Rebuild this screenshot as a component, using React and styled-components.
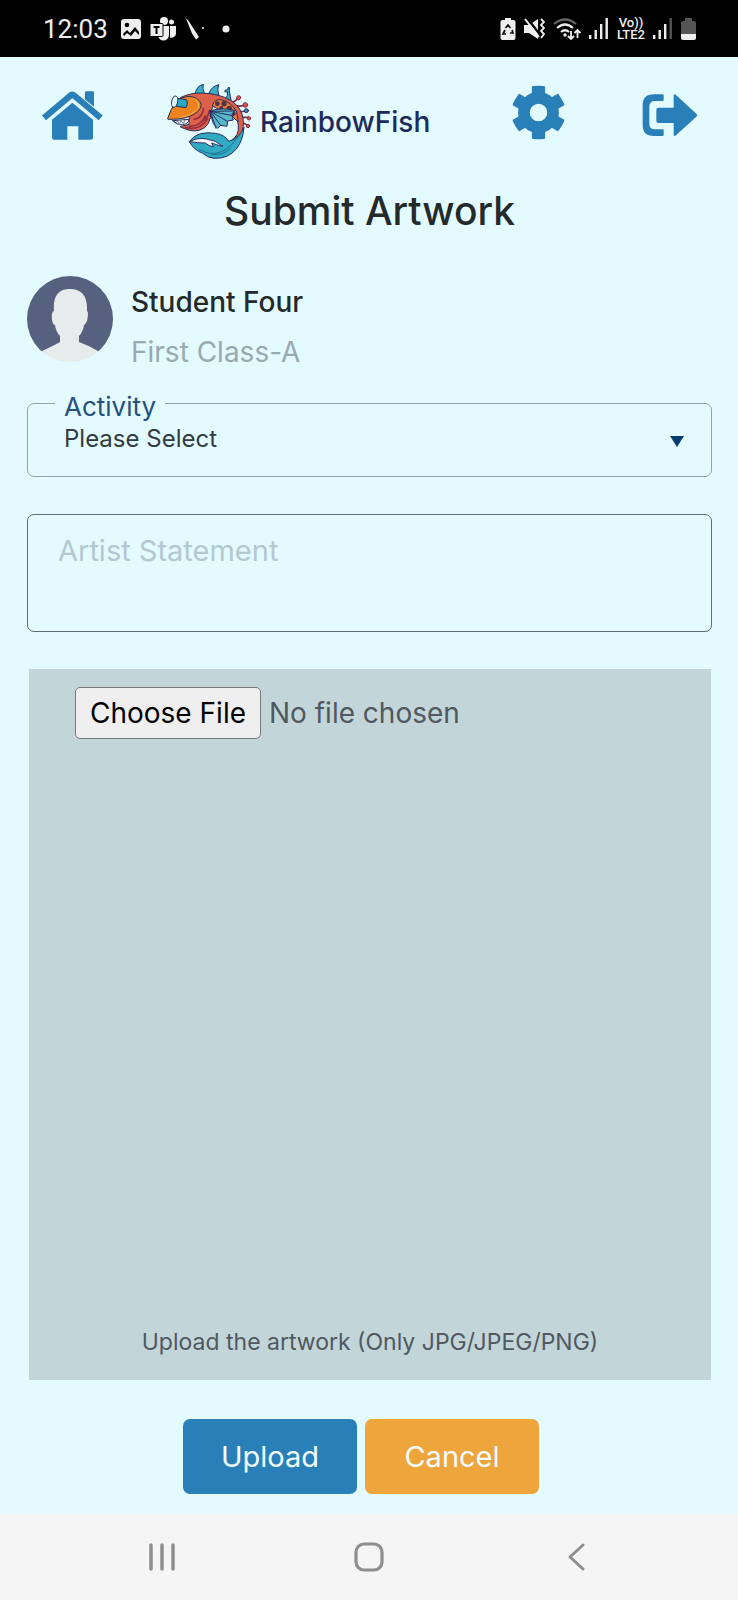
import React from "react";
import styled, { createGlobalStyle } from "styled-components";

const GlobalStyle = createGlobalStyle`
  *, *::before, *::after { box-sizing: border-box; }
  body { margin: 0; background: #e3fafe; }
  button, input, select, textarea { font: inherit; color: inherit; }
`;

const Page = styled.div`
  min-height: 100vh;
  display: flex;
  flex-direction: column;
  background: #e3fafe;
  color: #24292c;
  font-family: Inter, "Open Sans", sans-serif;
  font-size: 28px;
`;

const StatusBar = styled.div`
  display: flex;
  justify-content: space-between;
  align-items: center;
  height: 57px;
  padding: 0 42px 0 43px;
  background: #000;
  color: #eee;
  font-family: Roboto, sans-serif;
  svg { display: block; }
`;

const StatusGroup = styled.div`
  display: flex;
  align-items: center;
  gap: ${(p) => p.$gap}px;
`;

const Clock = styled.time`
  margin-right: 4px;
  font-size: 26px;
  line-height: 32px;
`;

const Network = styled.span`
  display: flex;
  flex-direction: column;
  align-items: center;
  font-size: 13px;
  font-weight: 500;
  line-height: 12px;
`;

const Header = styled.header`
  display: flex;
  align-items: flex-start;
  padding: 26px 40px 0 41px;
  svg { display: block; }
`;

const IconButton = styled.button`
  padding: ${(p) => p.$drop}px 0 0;
  border: 0;
  background: none;
  color: #2980b9;
  cursor: pointer;
`;

const Logo = styled.a`
  display: flex;
  align-items: center;
  gap: 8px;
  margin-left: 62px;
  color: #1d2a5b;
  font-size: 28px;
  font-weight: 500;
  line-height: 36px;
  text-decoration: none;
`;

const HeaderActions = styled.nav`
  display: flex;
  align-items: flex-start;
  gap: 77px;
  margin-left: auto;
`;

const Main = styled.main`
  flex: 1;
  display: flex;
  flex-direction: column;
  padding: 0 26px 20px 27px;
`;

const Title = styled.h1`
  margin: 26px 0 41px;
  font-size: 39px;
  font-weight: 500;
  line-height: 48px;
  text-align: center;
`;

const Student = styled.section`
  display: flex;
  align-items: flex-start;
  gap: 18px;
  margin-bottom: 17px;
  svg { display: block; }
`;

const StudentText = styled.div`
  padding-top: 8px;
`;

const StudentName = styled.h2`
  margin: 0 0 14px;
  font-size: 28px;
  font-weight: 500;
  line-height: 36px;
`;

const StudentClass = styled.p`
  margin: 0;
  color: #98a9b2;
  line-height: 36px;
`;

const Field = styled.fieldset`
  min-width: 0;
  height: 90px;
  margin: 0 0 37px;
  padding: 0 26px 0 27px;
  border: 1px solid #8fa3aa;
  border-radius: 7px;
`;

const Legend = styled.legend`
  padding: 8px 9px 0;
  color: #27507e;
  font-size: 26px;
  line-height: 24px;
`;

const SelectWrap = styled.div`
  position: relative;
  svg { position: absolute; right: 1px; top: 17px; pointer-events: none; }
`;

const Select = styled.select`
  display: block;
  width: 100%;
  height: 44px;
  padding: 0 30px 4px 9px;
  border: 0;
  background: transparent;
  color: #323c42;
  font-size: 24px;
  line-height: 32px;
  appearance: none;
`;

const Statement = styled.textarea`
  display: block;
  width: 100%;
  height: 118px;
  margin-bottom: 37px;
  padding: 18px 30px;
  border: 1px solid #5f6d77;
  border-radius: 7px;
  background: transparent;
  font-size: 29px;
  line-height: 36px;
  resize: none;
  &::placeholder { color: #b3c8d1; opacity: 1; }
`;

const DropArea = styled.section`
  flex: 1;
  display: flex;
  flex-direction: column;
  justify-content: space-between;
  min-height: 300px;
  margin: 0 1px 39px 2px;
  padding: 18px 46px 22px;
  background: #c2d6da;
  color: #505860;
`;

const FileInput = styled.input`
  width: 100%;
  line-height: 36px;
  &::file-selector-button {
    height: 52px;
    margin: 0 8px 0 0;
    padding: 0 14px;
    border: 1px solid #777;
    border-radius: 5px;
    background: #efefef;
    color: #000;
    font: inherit;
  }
`;

const Hint = styled.label`
  font-size: 23px;
  line-height: 32px;
  text-align: center;
`;

const Actions = styled.div`
  display: flex;
  justify-content: center;
  gap: 8px;
  padding-right: 17px;
`;

const ActionButton = styled.button`
  width: 174px;
  height: 75px;
  border: 0;
  border-radius: 7px;
  background: ${(p) => (p.$primary ? "#2980b9" : "#eea63c")};
  color: #f2fcff;
  font-size: 29px;
  cursor: pointer;
`;

const SystemNav = styled.nav`
  display: grid;
  grid-template-columns: 1fr 1fr 1fr;
  justify-items: center;
  align-items: center;
  height: 86px;
  padding: 0 58px;
  background: #f5f5f5;
  svg { display: block; }
`;

const SystemButton = styled.button`
  padding: 8px;
  border: 0;
  background: none;
  color: #8e8e8e;
`;

const PhotoIcon = () => (
  <svg width="20" height="20" viewBox="0 0 20 20">
    <rect width="20" height="20" rx="3" fill="#eee" />
    <circle cx="6" cy="6" r="2.3" fill="#000" />
    <path d="M2 15l4-4 3 3 5-6 4 5v3l-4-4-4 5-4-3-3 3z" fill="#000" />
  </svg>
);

const TeamsIcon = () => (
  <svg width="26" height="24" viewBox="0 0 26 24" fill="#eee">
    <circle cx="14" cy="4" r="4" />
    <circle cx="21.500" cy="5" r="2.500" />
    <path d="M8 9h11v9a5.500 5.500 0 0 1-11 0z" />
    <path d="M20 9h6v7a4.500 4.500 0 0 1-6 4.500z" />
    <rect y="6.500" width="13" height="13" rx="1" stroke="#000" />
    <path d="M3.500 10h6M6.500 10v7" stroke="#000" strokeWidth="2" />
  </svg>
);

const PenIcon = () => (
  <svg width="20" height="24" viewBox="0 0 20 24" fill="#eee">
    <path d="M1 1.500L3 3l11 17-3 2.500-4-6z" />
    <circle cx="18" cy="11" r="1" />
  </svg>
);

const BatterySaverIcon = () => (
  <svg width="16" height="22" viewBox="0 0 16 22">
    <path d="M5 0h6v2h2.500a2 2 0 0 1 2 2v16a2 2 0 0 1-2 2h-11a2 2 0 0 1-2-2V4a2 2 0 0 1 2-2H5z" fill="#eee" />
    <path d="M5.500 10L8 7l2.500 3M12 12l1 3h-3M6 16H3l2-4" fill="none" stroke="#111" strokeWidth="1.700" />
  </svg>
);

const MuteIcon = () => (
  <svg width="21" height="22" viewBox="0 0 21 22">
    <path d="M0 7h5l9-6v20l-9-6H0z" fill="#eee" />
    <path d="M3 0l14 18" stroke="#000" strokeWidth="2.500" />
    <path d="M1 1l14 18" stroke="#eee" strokeWidth="2" />
    <path d="M17 1l3 3-3 3 3 3-3 3 3 3-3 4" fill="none" stroke="#eee" strokeWidth="1.800" />
  </svg>
);

const WifiIcon = () => (
  <svg width="28" height="22" viewBox="0 0 28 22" fill="none" strokeWidth="2.200">
    <path d="M1 6q11-9 22 0" stroke="#666" />
    <path d="M4 10q8-7 16 0M8 14q4-3.500 8 0" stroke="#eee" />
    <circle cx="12" cy="17" r="1.700" fill="#eee" />
    <path d="M18 13v7m-3-2l3 3 3-3M24.500 20v-7m-3 2l3-3 3 3" stroke="#eee" strokeWidth="1.800" />
  </svg>
);

const SignalIcon = ({ last = "#eee" }) => (
  <svg width="20" height="21" viewBox="0 0 20 21" fill="#eee">
    <rect y="17" width="2.400" height="4" />
    <rect x="5.500" y="12" width="2.400" height="9" />
    <rect x="11" y="6" width="2.400" height="15" />
    <rect x="16.500" width="2.400" height="21" fill={last} />
  </svg>
);

const BatteryIcon = () => (
  <svg width="15" height="22" viewBox="0 0 15 22">
    <path d="M4 0h7v3h2a2 2 0 0 1 2 2v12H0V5a2 2 0 0 1 2-2h2z" fill="#555" />
    <path d="M0 16h15v4a2 2 0 0 1-2 2H2a2 2 0 0 1-2-2z" fill="#eee" />
  </svg>
);

const HomeIcon = () => (
  <svg width="63" height="51" viewBox="63 60 189 152" fill="currentColor">
    <path d="M198 63h21q3 0 3 3v44l-27-22V66q0-3 3-3z" />
    <path d="M72 143l81-68q4-3 8 0l81 68" fill="none" stroke="currentColor" strokeWidth="19" strokeLinejoin="round" />
    <path d="M157 98l62 51v54q0 6-6 6h-38v-41h-33v41h-40q-6 0-6-6v-54z" />
  </svg>
);

const GearIcon = () => (
  <svg width="53" height="55" viewBox="67 43 158 166" fill="currentColor">
    <circle cx="146" cy="126" r="44" fill="none" stroke="currentColor" strokeWidth="35" />
    {[0, 60, 120, 180, 240, 300].map((angle) => (
      <path key={angle} d="M126 74V49q0-3 4-3 16-2 32 0 4 0 4 3v25l12 8h-64z" transform={`rotate(${angle} 146 126)`} />
    ))}
  </svg>
);

const ExitIcon = () => (
  <svg width="56" height="44" viewBox="457 70 168 130" fill="currentColor">
    <path d="M519 73h-27q-33 0-33 33v59q0 33 33 33h27q3 0 3-3v-14q0-3-3-3h-23q-17 0-17-17v-51q0-17 17-17h23q3 0 3-3V76q0-3-3-3z" />
    <path d="M506 113h46V78q0-8 7-3l61 56q5 4 0 9l-61 56q-7 5-7-3v-34h-46q-6 0-6-6v-34q0-6 6-6z" />
  </svg>
);

const FishIcon = () => (
  <svg width="86" height="78" viewBox="48 36 258 234" stroke="#26305f" strokeWidth="3" strokeLinejoin="round" strokeLinecap="round" aria-hidden="true">
    <path d="M135 69q5-25 25-29-4 12 3 27zM177 66q8-20 29-25-5 13 0 32z" fill="#39adc9" />
    <path d="M228 82q8-10 4-20l-7 1v-5l8-2 1-6h5l-1 9q3 18 6 33z" fill="#39adc9" />
    <g fill="none" stroke="#7e3044" strokeWidth="5">
      <path d="M245 94q13-3 18-12M255 103q15 5 26 0M265 121q12 3 20-2M272 139h23M275 153l17 10" />
    </g>
    <g fill="#d8564c" stroke="#7e3044">
      <circle cx="266" cy="80" r="6" /><circle cx="286" cy="102" r="7" />
      <circle cx="297" cy="142" r="5" /><circle cx="294" cy="165" r="5" />
    </g>
    <circle cx="289" cy="119" r="6" fill="#398db0" />
    <path d="M80 87q29-21 72-21 54 1 90 22 35 22 38 61 2 35-20 63-13-8-17-2 25-16 22-47-4-46-39-61-34-10-42 15-1 51-36 61-26 6-58-11l27-7q9-38-37-73z" fill="#df6048" />
    <path d="M187 104q6-23 30-17 28 7 43 36l5 30-22-20-27-14z" fill="#ed7b36" />
    <g fill="#51324a" stroke="none"><circle cx="202" cy="98" r="7" /><circle cx="222" cy="98" r="8" /><circle cx="238" cy="112" r="8" /><circle cx="250" cy="128" r="7" /><circle cx="214" cy="111" r="6" /></g>
    <g fill="none" stroke="#912f43" strokeWidth="5"><path d="M118 166q34 1 48-31M106 169q43 12 67-26M133 145q24-4 28-32M158 149q17-10 20-29" /></g>
    <path d="M53 142q7-28 30-54 32-21 58-5 24 18 2 39-28 25-88 23z" fill="#ed831f" />
    <path d="M136 83q21 21 0 38-19 15-47 19" fill="none" stroke="#f5b13f" />
    <path d="M68 149l49-4q0 13-20 16-17 2-29-12z" fill="#f6faf5" />
    <path d="M72 151l6 4 4-5 6 7 5-7 7 7 5-9" fill="none" strokeWidth="2" />
    <path d="M82 82l27 4q6 8-1 24l-28-4z" fill="#29a9c4" />
    <ellipse cx="74" cy="92" rx="9" ry="17" fill="#dcf4f8" transform="rotate(12 74 92)" />
    <path d="M179 119q40-10 75-1l-9 14 5 15-17 3-2 16-19-3-9 9-12-13z" fill="#57b8cc" />
    <path d="M181 121l70-1M181 121l63 12M181 121l51 30M181 121l32 43M181 121l17 51" fill="none" />
    <path d="M282 170q-16 33-46 41-12-20-40-24-22-4-45 1-22 7-33 24 14 25 40 35 14 13 34 15 42 2 67-28 20-25 23-64z" fill="#31aac3" />
    <path d="M119 212q24-14 50-8 28 3 50 22-22-5-34-10l5 12q-14-3-24-12-22 0-47-4z" fill="#f6fbfd" />
    <path d="M148 235q33 22 69 6 26-11 51-49M185 251q35 3 56-18" fill="none" stroke="#1f7392" />
  </svg>
);

const Avatar = () => (
  <svg width="86" height="86" viewBox="0 0 86 86" role="img" aria-label="Student">
    <defs><clipPath id="avatar-circle"><circle cx="43" cy="43" r="43" /></clipPath></defs>
    <g clipPath="url(#avatar-circle)">
      <path d="M0 0h86v76H0z" fill="#56607f" />
      <path d="M27 35q-2-22 16-22t17 22q2 1 0 10-2 4-3 4-1 7-5 11v6q11 4 19 9l18 11H-3l18-11q11-5 18-9v-6q-4-4-5-11-2 0-3-5-1-8 2-9z" fill="#e6ebec" />
    </g>
  </svg>
);

export default function App() {
  return (
    <Page>
      <GlobalStyle />
      <StatusBar>
        <StatusGroup $gap={9}>
          <Clock>12:03</Clock>
          <PhotoIcon />
          <TeamsIcon />
          <PenIcon />
          <svg width="20" height="8" viewBox="0 0 20 8"><circle cx="12" cy="4" r="3.500" fill="#eee" /></svg>
        </StatusGroup>
        <StatusGroup $gap={8}>
          <BatterySaverIcon />
          <MuteIcon />
          <WifiIcon />
          <SignalIcon />
          <Network><span>Vo))</span><span>LTE2</span></Network>
          <SignalIcon last="#555" />
          <BatteryIcon />
        </StatusGroup>
      </StatusBar>

      <Header>
        <IconButton $drop={7} aria-label="Home"><HomeIcon /></IconButton>
        <Logo href="#"><FishIcon />RainbowFish</Logo>
        <HeaderActions>
          <IconButton $drop={2} aria-label="Settings"><GearIcon /></IconButton>
          <IconButton $drop={10} aria-label="Log out"><ExitIcon /></IconButton>
        </HeaderActions>
      </Header>

      <Main>
        <Title>Submit Artwork</Title>
        <Student>
          <Avatar />
          <StudentText>
            <StudentName>Student Four</StudentName>
            <StudentClass>First Class-A</StudentClass>
          </StudentText>
        </Student>

        <Field>
          <Legend><label htmlFor="activity">Activity</label></Legend>
          <SelectWrap>
            <Select id="activity" defaultValue="">
              <option value="">Please Select</option>
            </Select>
            <svg width="14" height="11" viewBox="0 0 14 11"><path d="M0 0h14L7 11z" fill="#043b70" /></svg>
          </SelectWrap>
        </Field>

        <Statement aria-label="Artist Statement" placeholder="Artist Statement" />

        <DropArea>
          <FileInput id="artwork" type="file" accept=".jpg,.jpeg,.png" />
          <Hint htmlFor="artwork">Upload the artwork (Only JPG/JPEG/PNG)</Hint>
        </DropArea>

        <Actions>
          <ActionButton type="button" $primary>Upload</ActionButton>
          <ActionButton type="button">Cancel</ActionButton>
        </Actions>
      </Main>

      <SystemNav aria-label="System">
        <SystemButton aria-label="Recent apps">
          <svg width="28" height="28" viewBox="0 0 28 28"><path d="M3 2v24M14 2v24M25 2v24" stroke="currentColor" strokeWidth="3.500" strokeLinecap="round" /></svg>
        </SystemButton>
        <SystemButton aria-label="Home screen">
          <svg width="30" height="30" viewBox="0 0 30 30"><rect x="2" y="2" width="26" height="26" rx="8" fill="none" stroke="currentColor" strokeWidth="3.200" /></svg>
        </SystemButton>
        <SystemButton aria-label="Back">
          <svg width="18" height="28" viewBox="0 0 18 28"><path d="M16 2L3 14l13 12" fill="none" stroke="currentColor" strokeWidth="3" strokeLinecap="round" strokeLinejoin="round" /></svg>
        </SystemButton>
      </SystemNav>
    </Page>
  );
}
